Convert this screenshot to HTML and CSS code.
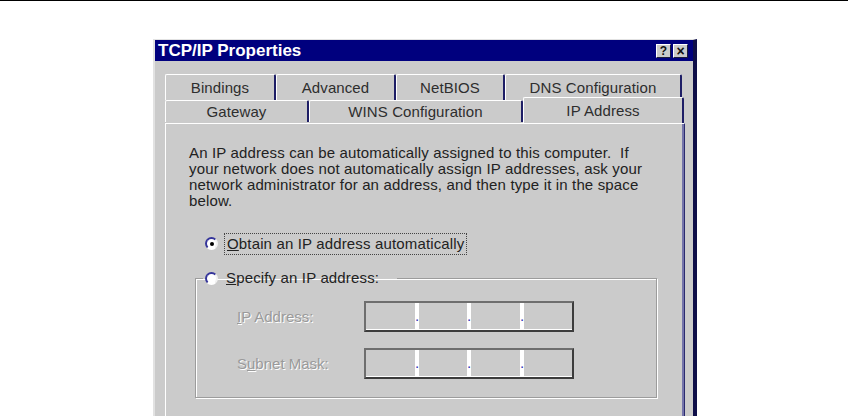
FILE: index.html
```html
<!DOCTYPE html>
<html lang="en">
<head>
  <meta charset="UTF-8">
  <title>TCP/IP Properties</title>
  <link rel="stylesheet" href="styles.css">
</head>
<body>
  <div class="rule"></div>

  <div class="dialog">
    <div class="titlebar">
      <span class="title">TCP/IP Properties</span>
      <div class="caption-btns">
        <span class="cbtn">?</span>
        <span class="cbtn close">×</span>
      </div>
    </div>

    <div class="dialog-body">
      <!-- two rows of tabs, the front row holds the selected one -->
      <div class="tab-row back">
        <div class="tab w-bindings">Bindings</div>
        <div class="tab w-advanced">Advanced</div>
        <div class="tab w-netbios">NetBIOS</div>
        <div class="tab w-dns">DNS Configuration</div>
      </div>
      <div class="tab-row front">
        <div class="tab w-gateway">Gateway</div>
        <div class="tab w-wins">WINS Configuration</div>
        <div class="tab w-ip selected">IP Address</div>
      </div>

      <div class="panel">
        <p class="intro">
          An IP address can be automatically assigned to this computer.&nbsp; If<br>
          your network does not automatically assign IP addresses, ask your<br>
          network administrator for an address, and then type it in the space<br>
          below.
        </p>

        <div class="option">
          <span class="radio checked"></span>
          <span class="option-label focused"><u>O</u>btain an IP address automatically</span>
        </div>

        <fieldset class="group">
          <legend class="group-legend">
            <span class="radio"></span>
            <span class="option-label"><u>S</u>pecify an IP address:</span>
          </legend>

          <div class="field-row">
            <span class="field-label"><u>I</u>P Address:</span>
            <div class="ip-box">
              <span class="seg s1"></span><span class="dot">.</span>
              <span class="seg s2"></span><span class="dot">.</span>
              <span class="seg s1"></span><span class="dot">.</span>
              <span class="seg s2"></span>
            </div>
          </div>

          <div class="field-row">
            <span class="field-label">S<u>u</u>bnet Mask:</span>
            <div class="ip-box">
              <span class="seg s1"></span><span class="dot">.</span>
              <span class="seg s2"></span><span class="dot">.</span>
              <span class="seg s1"></span><span class="dot">.</span>
              <span class="seg s2"></span>
            </div>
          </div>
        </fieldset>
      </div>
    </div>
  </div>
</body>
</html>
```

FILE: styles.css
```css
html, body {
  margin: 0;
  height: 416px;
  overflow: hidden;
  background: #fff;
  font-family: "Liberation Sans", Arial, sans-serif;
  color: #222;
}
.rule {
  height: 1px;
  background: #000;
}
.dialog {
  box-sizing: border-box;
  width: 544px;
  height: 377px;
  margin: 38px 0 0 153px;
  border-top: 1px solid #e2e2e2;
  border-left: 2px solid #e2e2e2;
  border-right: 4px solid #0e0e48;
  background: #cbcbcb;
  overflow: hidden;
}
.titlebar {
  height: 21px;
  background: #00007e;
  display: flex;
  align-items: center;
  justify-content: space-between;
  padding: 0 5px 0 3px;
}
.title {
  color: #fff;
  font-weight: bold;
  font-size: 17px;
}
.caption-btns {
  display: flex;
  gap: 2px;
}
.cbtn {
  box-sizing: border-box;
  width: 15px;
  height: 14px;
  background: #cbcbcb;
  border: 1px solid;
  border-color: #fff #1c1c3c #1c1c3c #fff;
  display: flex;
  align-items: center;
  justify-content: center;
  font-size: 12px;
  font-weight: bold;
  line-height: 1;
  color: #111;
}
.cbtn.close {
  font-size: 14px;
}
.dialog-body {
  padding: 13px 9px 0 10px;
}
.tab-row {
  display: flex;
}
.tab {
  box-sizing: border-box;
  border-top: 1px solid #fff;
  border-left: 1px solid #fff;
  border-right: 2px solid #1e1e66;
  border-radius: 2px 2px 0 0;
  display: flex;
  align-items: center;
  justify-content: center;
  font-size: 15px;
  letter-spacing: 0.1px;
  color: #2e2e2e;
  white-space: nowrap;
}
.back .tab { height: 26px; }
.front .tab { height: 22px; }
.w-bindings { width: 111px; }
.w-advanced { width: 120px; }
.w-netbios { width: 109px; }
.w-dns { width: 177px; }
.w-gateway { width: 144px; }
.w-wins { width: 214px; }
.w-ip { width: 161px; }
.front .tab.selected {
  position: relative;
  z-index: 1;
  height: 26px;
  margin-top: -3px;
  background: #cbcbcb;
}
.panel {
  box-sizing: border-box;
  width: 520px;
  height: 300px;
  border-top: 1px solid #fff;
  border-left: 1px solid #fff;
  border-right: 1px solid #2a2a6e;
  box-shadow: inset -2px 0 0 #7474aa;
  padding: 21px 0 0 23px;
}
.intro {
  margin: 0;
  font-size: 15px;
  line-height: 16px;
  letter-spacing: 0.15px;
  white-space: nowrap;
}
.option {
  display: flex;
  align-items: center;
  height: 23px;
  margin: 23px 0 0 16px;
}
.radio {
  box-sizing: border-box;
  width: 13px;
  height: 13px;
  border-radius: 50%;
  border: 2px solid;
  border-color: #34349a #f2f2f2 #ffffff #34349a;
  background: #fff;
  display: flex;
  align-items: center;
  justify-content: center;
  flex: none;
}
.radio.checked::after {
  content: "";
  width: 4px;
  height: 4px;
  border-radius: 50%;
  background: #000;
}
.option-label {
  font-size: 15px;
  line-height: 16px;
  letter-spacing: 0.15px;
  padding: 0 2px;
  margin-left: 6px;
  white-space: nowrap;
}
.option-label.focused {
  box-sizing: border-box;
  height: 22px;
  width: 243px;
  display: flex;
  align-items: center;
  border: 1px dotted #444;
}
.group {
  box-sizing: border-box;
  width: 462px;
  margin: 14px 0 0 6px;
  padding: 14px 0 18px 7px;
  border: 1px solid #9c9c9c;
  box-shadow: 1px 1px 0 #fff, inset 1px 1px 0 #fff;
}
.group-legend {
  display: flex;
  align-items: center;
  height: 18px;
  padding: 0 16px 0 2px;
}
.field-row {
  display: flex;
  align-items: center;
  padding-left: 34px;
}
.field-row + .field-row {
  margin-top: 16px;
}
.field-label {
  width: 127px;
  font-size: 15px;
  color: #9a9a9a;
  text-shadow: 1px 1px 0 #fff;
  white-space: nowrap;
}
.ip-box {
  box-sizing: border-box;
  width: 210px;
  height: 31px;
  display: flex;
  border: 2px solid;
  border-color: #6e6e6e #3c3c3c #3c3c3c #6e6e6e;
  box-shadow: inset 0 -1px 0 #fff;
}
.seg.s1 { width: 49px; }
.seg.s2 { width: 48px; }
.dot {
  width: 4px;
  height: 26px;
  background: #fff;
  color: #3030b8;
  font-size: 15px;
  line-height: 1;
  padding-top: 5px;
  box-sizing: border-box;
  overflow: hidden;
  text-align: center;
}
```
